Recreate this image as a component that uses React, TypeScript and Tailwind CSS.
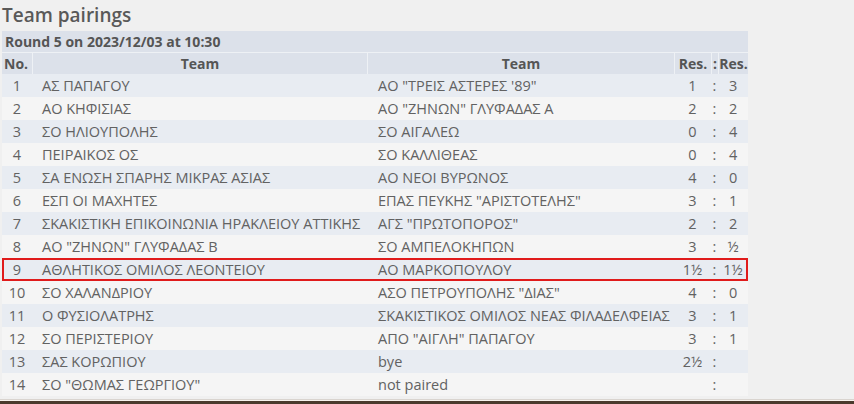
const rows: [string, string, string, string, string][] = [
  ["1", "ΑΣ ΠΑΠΑΓΟΥ", "ΑΟ \"ΤΡΕΙΣ ΑΣΤΕΡΕΣ '89\"", "1", "3"],
  ["2", "ΑΟ ΚΗΦΙΣΙΑΣ", "ΑΟ \"ΖΗΝΩΝ\" ΓΛΥΦΑΔΑΣ Α", "2", "2"],
  ["3", "ΣΟ ΗΛΙΟΥΠΟΛΗΣ", "ΣΟ ΑΙΓΑΛΕΩ", "0", "4"],
  ["4", "ΠΕΙΡΑΙΚΟΣ ΟΣ", "ΣΟ ΚΑΛΛΙΘΕΑΣ", "0", "4"],
  ["5", "ΣΑ ΕΝΩΣΗ ΣΠΑΡΗΣ ΜΙΚΡΑΣ ΑΣΙΑΣ", "ΑΟ ΝΕΟΙ ΒΥΡΩΝΟΣ", "4", "0"],
  ["6", "ΕΣΠ ΟΙ ΜΑΧΗΤΕΣ", "ΕΠΑΣ ΠΕΥΚΗΣ \"ΑΡΙΣΤΟΤΕΛΗΣ\"", "3", "1"],
  ["7", "ΣΚΑΚΙΣΤΙΚΗ ΕΠΙΚΟΙΝΩΝΙΑ ΗΡΑΚΛΕΙΟΥ ΑΤΤΙΚΗΣ", "ΑΓΣ \"ΠΡΩΤΟΠΟΡΟΣ\"", "2", "2"],
  ["8", "ΑΟ \"ΖΗΝΩΝ\" ΓΛΥΦΑΔΑΣ Β", "ΣΟ ΑΜΠΕΛΟΚΗΠΩΝ", "3", "½"],
  ["9", "ΑΘΛΗΤΙΚΟΣ ΟΜΙΛΟΣ ΛΕΟΝΤΕΙΟΥ", "ΑΟ ΜΑΡΚΟΠΟΥΛΟΥ", "1½", "1½"],
  ["10", "ΣΟ ΧΑΛΑΝΔΡΙΟΥ", "ΑΣΟ ΠΕΤΡΟΥΠΟΛΗΣ \"ΔΙΑΣ\"", "4", "0"],
  ["11", "Ο ΦΥΣΙΟΛΑΤΡΗΣ", "ΣΚΑΚΙΣΤΙΚΟΣ ΟΜΙΛΟΣ ΝΕΑΣ ΦΙΛΑΔΕΛΦΕΙΑΣ", "3", "1"],
  ["12", "ΣΟ ΠΕΡΙΣΤΕΡΙΟΥ", "ΑΠΟ \"ΑΙΓΛΗ\" ΠΑΠΑΓΟΥ", "3", "1"],
  ["13", "ΣΑΣ ΚΟΡΩΠΙΟΥ", "bye", "2½", ""],
  ["14", "ΣΟ \"ΘΩΜΑΣ ΓΕΩΡΓΙΟΥ\"", "not paired", "", ""],
];

export default function App() {
  return (
    <div className="relative h-[404px] w-[854px] overflow-hidden bg-[#f0f0f0] font-['Open_Sans','Noto_Sans',sans-serif] text-[#626262]">
      <h2 className="pl-[2px] pt-[2px] text-[19px] leading-[26px] font-semibold text-[#595959]">Team pairings</h2>
      <table className="ml-[2px] mt-[3px] w-[746px] table-fixed border-separate border-spacing-0 text-[14.5px]">
        <colgroup>
          <col className="w-[30px]" />
          <col className="w-[335px]" />
          <col className="w-[307px]" />
          <col className="w-[37px]" />
          <col className="w-[7px]" />
          <col className="w-[30px]" />
        </colgroup>
        <thead>
          <tr>
            <th colSpan={6} className="h-[21px] bg-[#dce1ea] px-[3px] text-left text-[14px] leading-[20px] font-bold text-[#555]">
              Round 5 on 2023/12/03 at 10:30
            </th>
          </tr>
          <tr className="text-[14px] font-bold text-[#555]">
            <th className="h-[22px] border-t border-[#eef1f5] bg-[#dce1ea] pl-[2px] text-left">No.</th>
            <th className="border-t border-l border-[#eef1f5] bg-[#dce1ea] text-center">Team</th>
            <th className="border-t border-l border-[#eef1f5] bg-[#dce1ea] text-center">Team</th>
            <th className="border-t border-l border-[#eef1f5] bg-[#dce1ea] text-center">Res.</th>
            <th className="border-t border-l border-[#eef1f5] bg-[#dce1ea] text-center">:</th>
            <th className="border-t border-l border-[#eef1f5] bg-[#dce1ea] text-center">Res.</th>
          </tr>
        </thead>
        <tbody>
          {rows.map(([no, a, b, r1, r2], i) => {
            const bg = i % 2 === 0 ? "bg-[#e8ecf2]" : "bg-[#f5f5f5]";
            const hl = no === "9";
            const ring = hl ? "shadow-[inset_0_2px_0_#e01b1b,inset_0_-2px_0_#e01b1b]" : "";
            const ringL = hl ? "shadow-[inset_2px_2px_0_#e01b1b,inset_0_-2px_0_#e01b1b]" : "";
            const ringR = hl ? "shadow-[inset_-2px_2px_0_#e01b1b,inset_0_-2px_0_#e01b1b]" : "";
            return (
              <tr key={no}>
                <td className={`h-[23px] whitespace-nowrap text-center leading-[23px] ${bg} ${ringL}`}>{no}</td>
                <td className={`whitespace-nowrap pl-[10px] leading-[23px] ${bg} ${ring}`}>{a}</td>
                <td className={`whitespace-nowrap pl-[11px] leading-[23px] ${bg} ${ring}`}>{b}</td>
                <td className={`whitespace-nowrap text-center leading-[23px] ${bg} ${ring}`}>{r1}</td>
                <td className={`text-center leading-[23px] ${bg} ${ring}`}>:</td>
                <td className={`whitespace-nowrap text-center leading-[23px] ${bg} ${ringR}`}>{r2}</td>
              </tr>
            );
          })}
        </tbody>
      </table>
      <div className="absolute bottom-0 left-0 w-full">
        <div className="h-[1px] bg-[#d9d4cf]" />
        <div className="h-[1px] bg-[#f7f3ee]" />
        <div className="h-[3px] bg-[#4a3a2d]" />
      </div>
    </div>
  );
}
